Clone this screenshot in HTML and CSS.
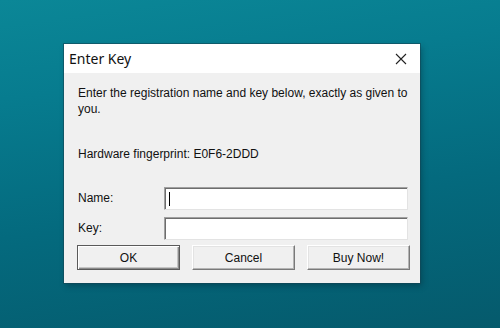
FILE: index.html
```html
<html>

<head>
  <link rel="stylesheet" href="styles.css">
</head>

<body>
  <div class="dialog">
    <div class="titlebar">
      <span class="title">Enter Key</span>
      <svg class="close" width="12" height="12" viewBox="0 0 12 12">
        <path d="M1 1 L11 11 M11 1 L1 11" stroke="#222" stroke-width="1.1" fill="none"/>
      </svg>
    </div>
    <div class="content">
      <p class="intro">Enter the registration name and key below, exactly as given to you.</p>
      <p class="hw">Hardware fingerprint: E0F6-2DDD</p>

      <div class="fields">
        <label for="name">Name:</label>
        <div class="field"><span class="caret"></span></div>
        <label for="key">Key:</label>
        <div class="field"></div>
      </div>

      <div class="buttons">
        <button class="btn default">OK</button>
        <button class="btn">Cancel</button>
        <button class="btn">Buy Now!</button>
      </div>
    </div>
  </div>
</body>

</html>
```

FILE: styles.css
```css
body {
  margin: 0;
  width: 500px;
  height: 328px;
  overflow: hidden;
  background: linear-gradient(172deg, #0b8797 0%, #077c8f 25%, #046a7e 60%, #055a6c 100%);
  font-family: 'Liberation Sans', Arial, sans-serif;
}

.dialog {
  margin: 44px 0 0 64px;
  width: 356px;
  height: 239px;
  background: #f0f0f0;
  box-shadow: 0 0 0 1px rgba(20, 70, 85, 0.6), 2px 3px 6px rgba(0, 30, 40, 0.35);
  display: flex;
  flex-direction: column;
}

.titlebar {
  height: 29px;
  background: #ffffff;
  display: flex;
  align-items: center;
  justify-content: space-between;
  padding: 0 13px 0 5px;
}

.title {
  font-family: 'Noto Sans', 'Open Sans', sans-serif;
  font-size: 14px;
  color: #111;
}

.content {
  padding: 12px 12px 0 14px;
  font-size: 12px;
  color: #111;
}

.content p {
  margin: 0;
  line-height: 16px;
}

.hw {
  margin-top: 29px !important;
}

.fields {
  margin-top: 25px;
  display: grid;
  grid-template-columns: 86px 1fr;
  row-gap: 7px;
  align-items: center;
}

.fields label {
  line-height: 23px;
}

.field {
  height: 21px;
  background: #ffffff;
  border-top: 1px solid #a0a0a0;
  border-left: 1px solid #a0a0a0;
  border-right: 1px solid #e3e3e3;
  border-bottom: 1px solid #e3e3e3;
  box-shadow: inset 1px 1px 0 #6d6d6d;
  display: flex;
  align-items: center;
}

.caret {
  width: 1px;
  height: 14px;
  margin-left: 4px;
  background: #000;
}

.buttons {
  margin: 5px 0 0 -1px;
  display: grid;
  grid-template-columns: repeat(3, 103px);
  column-gap: 12px;
}

.btn {
  height: 25px;
  font-family: 'Liberation Sans', Arial, sans-serif;
  font-size: 12px;
  color: #111;
  background: #f0f0f0;
  border-top: 1px solid #ffffff;
  border-left: 1px solid #ffffff;
  border-right: 1px solid #7a7a7a;
  border-bottom: 1px solid #7a7a7a;
  box-shadow: inset -1px -1px 0 #b4b4b4, inset 1px 1px 0 #e3e3e3;
  padding: 0;
}

.btn.default {
  border: 1px solid #5a5a5a;
  box-shadow: inset 1px 1px 0 #ffffff, inset -1px -1px 0 #8a8a8a, inset -2px -2px 0 #c4c4c4;
}
```
